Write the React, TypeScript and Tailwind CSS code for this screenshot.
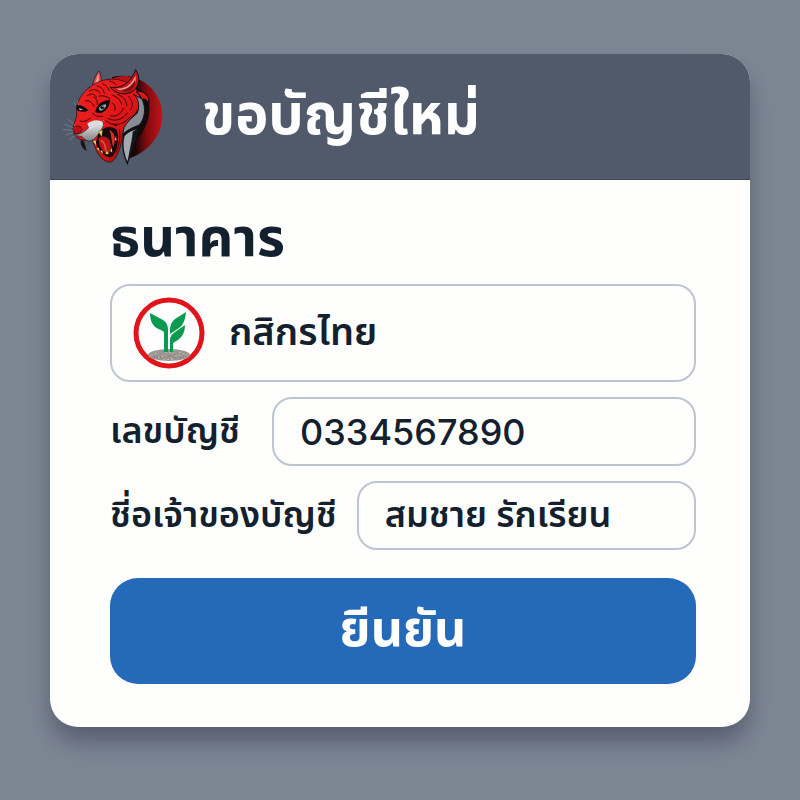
import type { ReactNode } from 'react';

function TigerLogo() {
  return (
    <svg viewBox="40 50 312 288" className="h-24 w-26 shrink-0" role="img" aria-label="Tiger">
      <defs>
        <linearGradient id="disc" x1="0" y1="0" x2="1" y2="0">
          <stop offset="0.45" stopColor="#160607" />
          <stop offset="0.68" stopColor="#7d0b0e" />
          <stop offset="1" stopColor="#c3151a" />
        </linearGradient>
        <linearGradient id="fur" x1="0" y1="0" x2="1" y2="1">
          <stop offset="0" stopColor="#f5231f" />
          <stop offset="0.6" stopColor="#dd1518" />
          <stop offset="1" stopColor="#8f0b10" />
        </linearGradient>
        <linearGradient id="muzzle" x1="0" y1="0" x2="0" y2="1">
          <stop offset="0" stopColor="#f1efee" />
          <stop offset="1" stopColor="#7f8488" />
        </linearGradient>
      </defs>
      <path d="M190 74 C240 62 290 80 320 122 C351 168 348 226 312 270 C292 295 266 310 238 320 L226 230 Z" fill="url(#disc)" />
      <path d="M186 84 C200 70 232 68 254 76 L240 110 Z" fill="#b51318" />
      <path d="M252 100 C284 108 306 140 302 176 C300 210 284 240 264 262 L236 330 L222 240 Z" fill="#120a0c" />
      <path d="M132 96 C136 80 142 66 151 55 C158 68 160 86 156 98 Z" fill="#d8504f" stroke="#1b0c10" strokeWidth="2" />
      <path d="M140 96 C142 82 147 70 151 64 C150 78 151 88 148 97 Z" fill="#f3a19a" />
      <path d="M108 99 C118 107 126 105 138 100 L132 112 Z" fill="#151014" />
      <path
        d="M84 166 C88 142 102 120 122 106 C144 86 180 76 208 82 C240 88 268 106 274 134 C280 158 266 180 248 196 C238 212 228 226 222 246 C218 280 208 316 188 329 C166 332 148 310 140 286 L130 262 L106 264 C92 262 76 252 74 238 C70 222 80 208 84 192 Z"
        fill="url(#fur)"
        stroke="#190609"
        strokeWidth="2"
      />
      <path d="M184 105 C218 110 246 92 261 52 C278 78 272 108 244 121 C224 129 200 123 184 105 Z" fill="#c61418" stroke="#15080b" strokeWidth="3" />
      <path d="M202 108 C229 112 250 96 260 69 C265 91 254 108 235 115 C224 118 211 115 202 108 Z" fill="#f0928b" />
      <path d="M212 113 C236 112 250 100 259 82 C263 100 250 115 232 118 Z" fill="#7b1014" />
      <path d="M262 118 C286 112 303 132 301 154 C295 141 286 137 279 142 C276 132 272 124 262 118 Z" fill="#d41a1d" stroke="#19080a" strokeWidth="3" />
      <path
        d="M254 126 C270 136 274 160 266 182 C254 194 238 204 226 226 L222 246 C236 232 254 224 272 218 C290 196 292 166 280 140 Z"
        fill="#868d95"
        stroke="#17141a"
        strokeWidth="3"
      />
      <path d="M226 250 C236 238 252 232 266 228 C266 258 250 288 236 333 C226 310 218 280 226 250 Z" fill="#a5aab0" stroke="#101014" strokeWidth="4" />
      <path d="M252 238 L265 230 C266 262 250 288 238 324 C242 292 250 268 252 238 Z" fill="#15161b" />
      <path d="M148 250 C158 224 184 216 204 232 C212 254 208 292 190 314 C168 318 148 296 142 270 Z" fill="#18080b" />
      <path d="M150 258 C160 248 178 252 184 266 C190 284 186 300 178 306 C162 300 150 284 150 258 Z" fill="#b91519" />
      <path d="M182 232 C200 240 202 264 194 284 C188 270 190 250 182 232 Z" fill="#e02a25" />
      <path d="M156 264 C166 266 170 280 172 296" fill="none" stroke="#f0473b" strokeWidth="5" />
      <path d="M78 244 C90 250 104 240 116 230 C130 214 148 206 162 208 C166 214 164 224 158 232 C148 248 138 262 126 266 C112 268 106 258 98 252 C90 252 82 250 78 244 Z" fill="url(#muzzle)" stroke="#17181c" strokeWidth="2" />
      <path d="M116 214 C130 202 150 200 164 210 C152 214 140 218 124 234 Z" fill="#dadcdd" />
      <path d="M74 228 C80 218 92 218 101 229 C96 240 88 246 78 244 Z" fill="#bb1016" stroke="#15080b" strokeWidth="2" />
      <path d="M102 264 C111 272 109 286 115 296 C102 292 95 278 96 264 Z" fill="#17141a" />
      <path d="M150 238 L162 232 L159 254 Z M132 266 L142 264 L142 280 Z M143 288 L151 286 L153 298 Z M154 296 L161 294 L164 307 Z M170 305 L175 292 L180 306 Z M184 296 L189 284 L191 301 Z M198 262 L202 250 L204 266 Z" fill="#f3df72" stroke="#30190b" />
      <path d="M140 180 C142 157 160 144 184 142 C183 163 170 180 153 183 Z" fill="#0f0b0f" />
      <path d="M151 168 C154 159 164 155 173 157 C170 169 160 176 153 174 Z" fill="#a9b4b7" />
      <circle cx="161" cy="165" r="6" fill="#10151a" />
      <circle cx="163" cy="162" r="2" fill="#ffffff" />
      <path d="M80 159 C94 156 108 162 120 175 C107 179 96 179 86 175 Z" fill="#100b0e" />
      <path d="M90 168 L104 171 L94 174 Z" fill="#bcc5c6" />
      <g fill="none" stroke="#3a060a" strokeWidth="3" strokeLinecap="round">
        <path d="M122 116 C136 108 148 112 154 122 M116 130 C128 122 138 124 143 135 M110 146 C122 142 130 150 136 162" />
        <path d="M162 94 C172 98 178 106 181 114 M145 101 C159 104 164 111 167 123 M182 86 C193 88 199 92 202 97" />
        <path d="M136 134 C144 140 147 148 146 156 M151 131 C165 129 174 132 184 139" />
        <path d="M190 128 C203 132 216 142 219 157 M206 126 C224 132 234 144 234 160 M190 152 C198 156 202 164 198 174" />
        <path d="M186 190 C202 196 218 184 224 168 M178 198 C198 210 222 202 236 182 M190 214 C210 222 230 210 246 192" />
        <path d="M240 132 C252 144 254 160 246 172 M132 182 C136 190 148 194 162 192" />
        <path d="M94 206 C104 210 114 206 124 198 M172 206 C182 212 192 218 204 220 M212 232 C216 254 212 276 202 300" />
      </g>
      <g fill="none" stroke="#c3cad1" strokeWidth="1">
        <path d="M78 228 L48 216 M76 234 L42 232 M78 240 L50 248 M82 222 L58 200 M84 246 L62 262" />
        <path d="M124 232 C138 216 150 208 166 205 M128 242 C142 228 154 220 168 218 M90 160 L86 146 M84 164 L76 150" />
      </g>
    </svg>
  );
}

function BankLogo() {
  return (
    <svg viewBox="0 0 72 72" className="size-18 shrink-0" aria-hidden="true">
      <circle cx="36" cy="36" r="33" fill="#fefefe" stroke="#e0141a" strokeWidth="5" />
      <ellipse cx="36" cy="58" rx="21" ry="6" fill="#9b9692" />
      <path d="M18 58 L26 55 M25 61 L33 58 M32 55 L41 56 M38 61 L47 58 M46 55 L54 58 M30 63 L42 62" stroke="#c5bfbb" strokeWidth="1" strokeDasharray="2 2" />
      <path d="M21 60 L30 60 M36 59 L44 61 M47 61 L53 59" stroke="#69645f" strokeWidth="1" strokeDasharray="1 2" />
      <path d="M17 16 L30 23 Q35 26 35 33 L35 55 L31 55 L31 35 L28 33 Q17 30 17 16 Z" fill="#0b9b50" />
      <path d="M53 15 L42 22 Q37 26 37 33 L37 37 L46 31 Q52 27 53 15 Z" fill="#0b9b50" />
      <path d="M52 28 L42 35 Q37 38 37 43 L37 55 L40 55 L40 46 L45 43 Q52 38 52 28 Z" fill="#0b9b50" />
    </svg>
  );
}

const box = 'flex items-center rounded-[20px] border-2 border-[#bdc6d0]';
const input = 'w-full min-w-0 bg-transparent outline-none';

function Field({ id, label, children }: { id: string; label: string; children: ReactNode }) {
  return (
    <div className="flex items-center justify-between">
      <label htmlFor={id} className="shrink-0 whitespace-nowrap text-[36px] leading-[56px] font-semibold">
        {label}
      </label>
      {children}
    </div>
  );
}

export default function App() {
  return (
    <div className="min-h-screen bg-[#7d8794] px-[50px] py-[54px] font-['Noto_Sans_Thai','Noto_Sans',sans-serif] text-[#13202e]">
      <main className="overflow-hidden rounded-[28px] bg-[#fefefd] shadow-[0_16px_24px_-2px_rgba(60,64,82,0.6)]">
        <header className="flex h-[126px] items-center gap-9 border-b border-[#3f4858] bg-[#505a6b] px-3">
          <TigerLogo />
          <h1 className="text-[56px] leading-[80px] font-bold text-white">ขอบัญชีใหม่</h1>
        </header>
        <form className="flex flex-col pt-5 pr-[54px] pb-[43px] pl-[60px]" onSubmit={(e) => e.preventDefault()}>
          <label htmlFor="bank" className="mb-1 text-[54px] leading-[80px] font-bold">
            ธนาคาร
          </label>
          <div className={`${box} h-[98px] gap-6 px-[21px]`}>
            <BankLogo />
            <input id="bank" className={`${input} h-16 text-[38px] font-semibold`} defaultValue="กสิกรไทย" />
          </div>
          <div className="mt-[15px] flex flex-col gap-[15px]">
            <Field id="account" label="เลขบัญชี">
              <div className={`${box} ml-8 h-[69px] grow px-[26px]`}>
                <input id="account" inputMode="numeric" className={`${input} h-14 font-['Inter',sans-serif] text-[36px] font-medium`} defaultValue="0334567890" />
              </div>
            </Field>
            <Field id="holder" label="ชี่อเจ้าของบัญชี">
              <div className={`${box} ml-5 h-[69px] grow px-[26px]`}>
                <input id="holder" className={`${input} h-14 text-[36px] font-semibold`} defaultValue="สมชาย รักเรียน" />
              </div>
            </Field>
          </div>
          <button type="submit" className="mt-7 h-[106px] rounded-[28px] bg-[#2569b9] text-[50px] font-bold text-white">
            ยีนยัน
          </button>
        </form>
      </main>
    </div>
  );
}
